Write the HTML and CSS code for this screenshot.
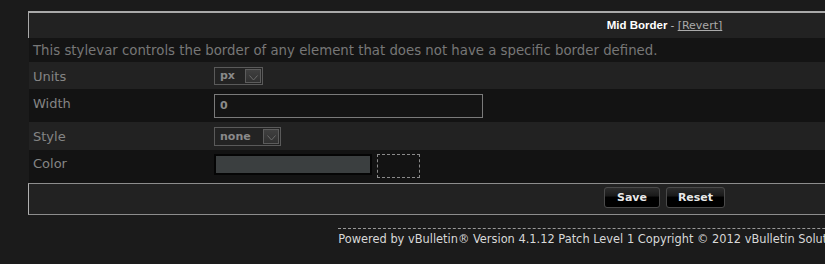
FILE: index.html
```html
<!DOCTYPE html>
<html>
<head>
<meta charset="utf-8">
<link rel="stylesheet" href="styles.css">
</head>
<body>
<div class="page">
  <div class="panel">
    <div class="head"><b>Mid Border</b> - <a href="#" class="revert">[Revert]</a></div>
    <div class="desc">This stylevar controls the border of any element that does not have a specific border defined.</div>
    <div class="row light">
      <div class="label">Units</div>
      <div class="field"><span class="select sel-units"><span class="sel-text">px</span><span class="sel-arrow"><svg width="9" height="6" viewBox="0 0 9 6"><path d="M0.5 0.5 L4.5 5 L8.5 0.5" fill="none" stroke="#6a6a6a" stroke-width="1"/></svg></span></span></div>
    </div>
    <div class="row dark">
      <div class="label">Width</div>
      <div class="field"><span class="textbox">0</span></div>
    </div>
    <div class="row light">
      <div class="label">Style</div>
      <div class="field"><span class="select sel-style"><span class="sel-text">none</span><span class="sel-arrow"><svg width="9" height="6" viewBox="0 0 9 6"><path d="M0.5 0.5 L4.5 5 L8.5 0.5" fill="none" stroke="#6a6a6a" stroke-width="1"/></svg></span></span></div>
    </div>
    <div class="row dark color-row">
      <div class="label">Color</div>
      <div class="field"><span class="colorbox"></span><span class="swatch"></span></div>
    </div>
    <div class="actions">
      <button class="btn btn-save">Save</button>
      <button class="btn btn-reset">Reset</button>
    </div>
  </div>
  <div class="footer"><span class="copy">Powered by vBulletin® Version 4.1.12 Patch Level 1 Copyright © 2012 vBulletin Solutions, Inc. All rights reserved.</span></div>
</div>
</body>
</html>
```

FILE: styles.css
```css
html, body {
  margin: 0;
  padding: 0;
  background: #1b1b1b;
  overflow: hidden;
}
body {
  font-family: "DejaVu Sans", Verdana, sans-serif;
  color: #888;
}
.page {
  width: 1330px;
  padding: 11px 0 0 28px;
}
.panel {
  width: 1272px;
  border-top: 2px solid #a9a9a9;
}
.head {
  height: 25px;
  line-height: 25px;
  background: #222;
  border-left: 1px solid #a9a9a9;
  text-align: center;
  font-family: "Liberation Sans", Arial, sans-serif;
  font-size: 11.5px;
  color: #bbb;
}
.head b {
  color: #fff;
}
.revert {
  color: #aaa;
  font-family: "DejaVu Sans", Verdana, sans-serif;
  font-size: 11px;
}
.desc {
  margin-left: 1px;
  height: 23px;
  padding-top: 1px;
  line-height: 24px;
  background: #141414;
  padding-left: 4px;
  font-size: 13.3px;
  color: #777;
  white-space: nowrap;
}
.row {
  margin-left: 1px;
  display: grid;
  grid-template-columns: 181px 1fr;
  padding: 5px 0 4px 4px;
}
.row.light { background: #222; }
.row.dark { background: #131313; }
.label {
  font-size: 13px;
  line-height: 16px;
  padding-top: 2px;
  color: #858585;
}
.field {
  display: flex;
  align-items: flex-start;
}
.select {
  display: flex;
  box-sizing: border-box;
  border: 1px solid #5a5a5a;
  background: #232323;
  height: 18px;
}
.sel-units { width: 49px; }
.sel-style { width: 67px; height: 19px; }
.sel-text {
  flex: 1;
  font-weight: bold;
  font-size: 11px;
  line-height: 16px;
  padding-left: 5px;
  color: #8a8a8a;
}
.sel-style .sel-text { line-height: 17px; }
.sel-arrow {
  width: 16px;
  margin: 1px 1px 1px 0;
  background: linear-gradient(#404040, #303030);
  border: 1px solid #5c5c5c;
  box-sizing: border-box;
  display: flex;
  align-items: center;
  justify-content: center;
  padding-top: 3px;
}
.sel-arrow svg { display: block; }
.textbox {
  box-sizing: border-box;
  width: 269px;
  height: 24px;
  border: 1px solid #7a7a7a;
  background: #141414;
  font-weight: bold;
  font-size: 11px;
  line-height: 22px;
  padding-left: 5px;
  color: #8a8a8a;
}
.color-row { padding-top: 4px; padding-bottom: 5px; }
.colorbox {
  box-sizing: border-box;
  width: 158px;
  height: 21px;
  border: 2px solid #050505;
  background: #3b3f40;
}
.swatch {
  box-sizing: border-box;
  width: 43px;
  height: 24px;
  margin-left: 5px;
  border: 1px dashed #8a8a8a;
}
.actions {
  border-top: 1px solid #8d8d8d;
  border-bottom: 1px solid #8d8d8d;
  border-left: 1px solid #b0b0b0;
  background: #222;
  height: 30px;
  display: flex;
  justify-content: center;
  align-items: flex-start;
  gap: 6px;
}
.btn {
  margin-top: 3px;
  box-sizing: border-box;
  height: 21px;
  padding: 0;
  border: 1px solid #4a4a4a;
  border-radius: 3px;
  background: linear-gradient(#2c2c2c 0%, #1a1a1a 40%, #000 50%, #000 100%);
  color: #e8e8e8;
  font-family: "DejaVu Sans", Verdana, sans-serif;
  font-weight: bold;
  font-size: 11px;
  line-height: 19px;
}
.btn-save { width: 56px; }
.btn-reset { width: 59px; }
.footer {
  width: 1272px;
  margin-top: 13px;
  display: flex;
  justify-content: center;
}
.copy {
  display: block;
  white-space: nowrap;
  border-top: 1px dashed #9a9a9a;
  padding-top: 3px;
  font-size: 11.4px;
  line-height: 14px;
  color: #d8d8d8;
}
```
